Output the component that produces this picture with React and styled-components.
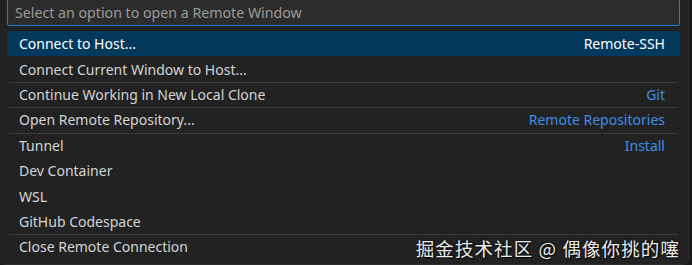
import React from 'react';
import styled, { createGlobalStyle } from 'styled-components';

const GlobalStyle = createGlobalStyle`
  html, body {
    margin: 0;
    padding: 0;
    background: #1b1b1b;
    overflow: hidden;
  }
  * { box-sizing: border-box; }
`;

const Stage = styled.div`
  position: relative;
  width: 692px;
  height: 265px;
  overflow: hidden;
  background: #1b1b1b;
`;

const Widget = styled.div`
  width: 690px;
  margin: -8px 0 0 -1px;
  padding: 6px 8px 4px 7px;
  background: #222222;
  border: 1px solid #2e2e2e;
  border-radius: 7px;
  font-family: "Noto Sans", "Open Sans", sans-serif;
`;

const Input = styled.div`
  height: 27px;
  display: flex;
  align-items: center;
  padding: 0 7px;
  background: #2c2c2c;
  border: 1px solid #1a7fd4;
  border-radius: 2px;
  color: #9a9a9a;
  font-size: 14.2px;
`;

const List = styled.div`
  margin-top: 5px;
  display: flex;
  flex-direction: column;
`;

const Row = styled.div`
  height: 25.4px;
  display: flex;
  align-items: center;
  justify-content: space-between;
  padding: 0 15px 0 12px;
  border-radius: 4px;
  font-size: 14px;
  color: #d4d4d4;
  background: ${p => (p.$active ? '#04395e' : 'transparent')};
  position: relative;

  ${p => p.$sep && `
    &::before {
      content: "";
      position: absolute;
      left: 2px;
      right: 2px;
      top: 0;
      height: 1px;
      background: #3a3a3a;
    }
  `}
`;

const Label = styled.span`
  color: ${p => (p.$active ? '#ffffff' : '#d4d4d4')};
`;

const Detail = styled.span`
  color: ${p => (p.$active ? '#ffffff' : '#3d8fe6')};
`;

const Watermark = styled.div`
  position: absolute;
  right: 12px;
  bottom: 4px;
  font-family: "Noto Sans CJK SC", "Noto Sans", sans-serif;
  font-size: 18.5px;
  letter-spacing: 1.1px;
  color: #ececec;
  text-shadow: 0 0 2px rgba(0, 0, 0, 0.9), 1px 1px 1px rgba(0, 0, 0, 0.8);
  white-space: nowrap;
`;

const items = [
  { label: 'Connect to Host...', detail: 'Remote-SSH', active: true },
  { label: 'Connect Current Window to Host...' },
  { label: 'Continue Working in New Local Clone', detail: 'Git', sep: true },
  { label: 'Open Remote Repository...', detail: 'Remote Repositories', sep: true },
  { label: 'Tunnel', detail: 'Install', sep: true },
  { label: 'Dev Container' },
  { label: 'WSL' },
  { label: 'GitHub Codespace' },
  { label: 'Close Remote Connection', sep: true },
];

const App = () => (
  <Stage>
    <GlobalStyle />
    <Widget>
      <Input>Select an option to open a Remote Window</Input>
      <List>
        {items.map(it => (
          <Row key={it.label} $active={it.active} $sep={it.sep}>
            <Label $active={it.active}>{it.label}</Label>
            {it.detail && <Detail $active={it.active}>{it.detail}</Detail>}
          </Row>
        ))}
      </List>
    </Widget>
    <Watermark>掘金技术社区 @ 偶像你挑的噻</Watermark>
  </Stage>
);

export default App;
